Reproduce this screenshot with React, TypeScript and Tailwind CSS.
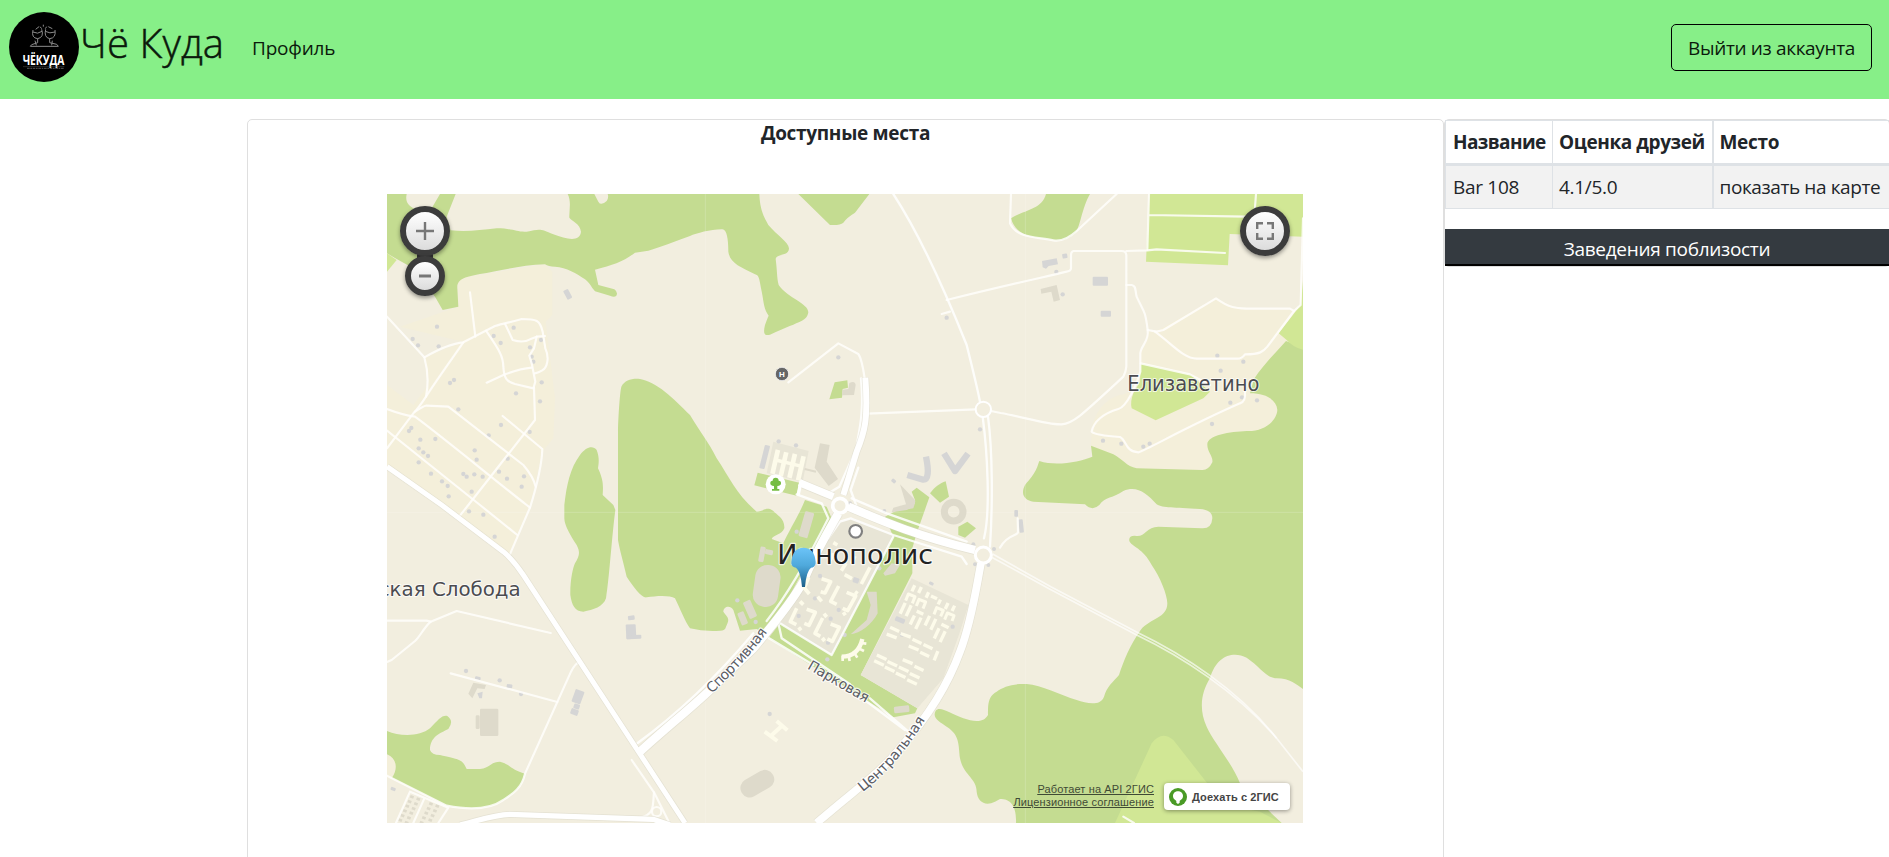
import React from "react";

const GREEN = "#c4dc91";
const LIME = "#d1e795";
const LAND = "#f2eedf";
const HOUSING = "#f4efda";
const GREY = "#d5d5d5";
const STONE = "#dedacb";
const BLOCK = "#e8e5d6";
const CREAM = "#fdfbea";

const forests = [
  "M21,27 H80 C75,50 85,60 100,70 H155 L180,27 H227 L200,95 L212,136 C260,142 300,135 350,130 C400,130 410,142 440,140 C480,132 480,130 520,148 C560,163 600,172 603,140 C600,115 575,108 568,98 C567,75 575,50 563,27 H643 L655,50 Q663,64 680,48 Q687,38 683,27 H1138 C1140,80 1155,100 1165,120 C1190,150 1225,170 1227,190 C1227,215 1190,205 1187,222 C1192,260 1190,275 1196,300 C1225,340 1285,355 1285,382 C1280,408 1270,405 1170,449 C1150,455 1150,440 1155,420 Q1162,400 1166,392 C1150,370 1152,350 1143,310 C1138,280 1136,270 1125,268 C1080,245 1050,235 1045,200 C1045,160 1040,130 1025,133 C990,133 950,145 930,153 C860,178 820,195 795,199 L765,203 C730,230 700,240 645,254 L655,300 L703,313 Q715,322 709,332 Q703,338 690,332 L645,319 C635,308 630,295 615,283 C590,265 560,248 525,245 Q505,245 495,238 C420,240 350,260 300,267 C260,275 230,280 232,310 L235,365 L188,375 L165,335 L100,250 L50,222 L21,205Z",
  "M714,960 V740 C715,690 720,620 724,605 C735,585 755,580 780,582 C830,590 880,640 930,690 C960,740 985,770 1010,820 C1050,880 1070,930 1130,980 C1150,980 1160,962 1180,978 C1190,990 1215,1000 1213,1030 C1205,1050 1180,1050 1175,1062 L1210,1075 C1225,1040 1260,985 1275,945 L1340,965 L1355,1000 L1165,1350 L1130,1332 L1080,1337 L1060,1275 C1050,1258 1030,1265 1030,1280 C1045,1300 1050,1300 1038,1325 Q1036,1337 1020,1337 Q970,1340 930,1330 C915,1310 900,1270 885,1240 C870,1230 830,1232 800,1237 C785,1240 760,1205 740,1175 C730,1130 720,1100 714,1065Z",
  "M553,960 C560,900 570,850 600,810 C620,783 640,782 650,795 C660,820 655,840 654,850 C670,885 670,900 668,930 L700,960 L706,975 C695,1060 688,1180 678,1240 C670,1265 640,1275 610,1280 C585,1280 575,1260 571,1230 C570,1190 578,1150 585,1135 C600,1110 600,1100 590,1080 C570,1050 553,1020 553,1000Z",
  "M1255,27 L1350,120 Q1380,122 1390,113 Q1400,98 1425,83 L1468,27Z",
  "M1998,27 H2130 C2105,70 2100,130 2085,145 C2060,165 2040,170 2020,166 C1970,155 1910,160 1893,100 C1930,75 1985,75 1998,27Z",
  "M2718,468 C2680,510 2650,540 2622,582 L2610,625 C2660,625 2690,645 2692,675 C2690,710 2650,740 2600,738 C2550,740 2480,750 2482,780 C2482,800 2500,815 2497,832 Q2485,857 2465,855 L2270,850 C2240,845 2225,820 2200,808 L2133,782 L2137,815 C2100,830 2030,845 1978,828 C1970,850 1970,860 1935,900 C1920,930 1935,945 1960,950 L2115,958 Q2137,980 2158,960 C2175,935 2200,940 2230,918 C2270,900 2300,925 2330,958 C2350,970 2380,967 2460,972 Q2497,975 2497,1000 Q2495,1032 2465,1030 L2335,1025 C2300,1025 2295,1055 2270,1053 Q2245,1050 2248,1068 C2255,1085 2290,1090 2315,1140 C2340,1175 2362,1230 2362,1255 C2362,1300 2310,1300 2282,1335 C2250,1380 2230,1430 2217,1470 C2200,1490 2180,1505 2172,1535 C2160,1565 2120,1555 2090,1545 C2040,1530 1985,1500 1940,1497 C1900,1495 1870,1505 1850,1520 C1820,1535 1825,1570 1824,1590 C1810,1615 1780,1610 1750,1600 C1710,1585 1680,1562 1667,1577 C1655,1600 1680,1610 1700,1625 C1740,1650 1735,1680 1740,1720 C1750,1770 1790,1780 1790,1820 C1793,1850 1815,1865 1845,1850 L1860,1842 C1890,1842 1910,1860 1908,1914 H2769 V468 Q2740,480 2718,468Z",
  "M21,1638 C60,1655 120,1655 150,1630 C175,1605 185,1590 202,1593 Q223,1608 205,1632 C180,1645 150,1655 150,1695 Q155,1710 180,1710 C240,1725 245,1720 260,1752 H300 C335,1748 330,1730 360,1730 C385,1735 395,1755 435,1766 C425,1810 400,1825 370,1845 C320,1880 240,1870 200,1862 L36,1778 C55,1750 50,1720 21,1708Z",
  "M1515,995 L1590,955 L1605,945 L1595,920 L1610,908 L1648,937 L1610,1045 L1597,1090 V1165 L1442,1470 L1612,1570 L1605,1585 L1540,1597 L1165,1360 L1200,1315 L1355,1410 L1540,1055Z",
  "M1650,925 C1665,905 1680,895 1697,889 L1707,935 L1680,953Z",
  "M1735,1025 L1762,1010 L1788,1030 L1755,1058 L1735,1050Z",
  "M1364,592 L1402,586 L1404,608 L1388,612 L1386,638 L1348,643Z",
  "M1133,863 L1258,893 L1250,932 L1123,901Z",
];

const limeFields = [
  "M21,205 L50,225 L21,260Z",
  "M2307,27 H2769 V155 L2549,147 L2544,241 L2298,230Z",
  "M2769,285 L2762,360 L2696,445 L2720,465 Q2740,488 2769,494Z",
  "M2282,535 L2430,568 L2490,620 L2470,640 L2327,706 L2255,670 Q2250,650 2260,625 L2280,590Z",
  "M2205,1914 L2315,1675 Q2345,1635 2380,1665 L2490,1805 L2540,1860 L2640,1880 L2705,1914Z",
];

const housing = [
  "M232,280 L495,238 L517,260 V390 L497,410 L525,640 L520,760 L487,800 L450,960 L388,1110 L235,1000 L21,840 V600 L100,660 L145,600 L135,517 L250,470 L60,425 L235,365Z",
  "M2302,435 L2325,440 L2508,340 L2570,370 H2735 L2760,400 V700 L2500,860 H2260 L2133,782 L2135,740 C2140,680 2180,640 2220,630 C2270,620 2281,590 2281,560 V500 C2290,485 2305,480 2302,435Z",
  "M21,1708 C50,1720 55,1750 36,1778 H21Z",
];

const lanes = [
  "M21,395 L133,517 C145,560 145,600 138,635 C125,655 110,675 100,685 L21,790",
  "M133,517 C180,490 215,475 250,472 L345,423 C370,415 390,412 425,402 C470,402 480,405 488,440 L496,490 C510,520 500,550 487,556 Q475,563 465,565",
  "M250,472 C210,530 160,600 138,635",
  "M270,322 L286,455",
  "M318,437 C350,485 370,510 370,545 C372,580 380,590 405,597 L460,610 L466,590 L455,535 L448,512 L462,490 L470,455 L495,453",
  "M375,416 L398,465 Q430,475 450,463 L470,455",
  "M320,593 L375,568 C410,555 430,550 455,548",
  "M462,608 L465,705 L265,960 L235,998",
  "M21,672 C50,683 70,690 105,695 C180,750 350,890 440,960 L450,968",
  "M105,680 Q135,660 140,662 L205,665 L430,840 Q460,875 467,905",
  "M21,737 L300,960 L412,1050",
  "M368,693 L487,792 C485,850 465,920 450,968 L388,1112",
  "M21,1307 H140 L152,1310 L230,1278 L512,1344",
  "M152,1310 C130,1330 120,1355 105,1368 L35,1425 L21,1431",
  "M212,1465 L532,1551",
  "M600,1430 Q585,1435 573,1460 L435,1766 C425,1810 400,1825 370,1845 C320,1880 240,1870 200,1862 L21,1772",
  "M90,1820 L48,1914 M90,1820 L205,1868 L175,1914 M133,1840 L100,1914",
  "M755,1725 L822,1822 C818,1860 825,1890 780,1898",
  "M822,1822 L868,1914",
  "M1225,592 L1375,475 L1435,507 Q1445,520 1454,580",
  "M1462,686 L1788,673 M1833,678 L1862,684 C1930,695 2000,720 2045,718 C2080,715 2100,695 2230,575 Q2238,560 2239,545 V210 Q2238,198 2225,198 H2080 Q2073,200 2073,210 V250 Q2073,258 2060,260 C2000,275 1900,295 1700,345",
  "M2239,198 L2302,196 L2330,193 L2535,204",
  "M1685,387 L1710,380",
  "M2307,27 L2302,195 M2305,90 L2600,95 M2628,27 L2624,80",
  "M2210,27 L2090,138 C2060,165 2040,170 2020,166 C1970,155 1910,160 1890,115 L1893,27",
  "M2239,300 H2255 C2270,302 2265,320 2270,335 C2290,380 2295,370 2303,435 C2308,470 2283,480 2281,505 V560 C2270,600 2240,665 2215,672 C2170,685 2140,710 2135,740 Q2145,750 2220,756 C2240,765 2235,800 2275,802 C2300,795 2420,725 2580,655 Q2598,650 2595,620",
  "M2303,435 L2330,440 L2350,435 L2508,340 C2550,370 2570,370 2600,371 H2730 L2742,378 L2762,360 L2769,100",
  "M2325,440 C2380,480 2410,520 2450,521 H2570 Q2585,522 2595,508 C2640,508 2650,500 2662,485 L2742,378",
  "M2282,535 L2430,568 L2490,600",
  "M1860,1088 C1885,1045 1910,1055 1914,1042 L1913,1000",
  "M2230,1895 L2262,1914",
];

const streets = [
  "M1540,27 C1620,150 1700,330 1760,480 C1780,560 1790,600 1800,650",
  "M1808,695 C1822,800 1832,980 1812,1060 M1824,695 C1838,800 1838,960 1830,1085",
  "M1443,580 C1455,700 1430,760 1430,790 L1378,905 L1345,925",
  "M1435,848 L1412,915 L1430,965",
  "M1250,928 L1325,955 L1345,1000 C1290,1110 1230,1220 1160,1308 M1120,1345 C1040,1440 930,1560 773,1674",
  "M1195,1315 L1205,1360 L1410,1498 M1160,1355 L1300,1440",
  "M1460,1550 L1575,1635 M1470,1540 L1585,1640",
  "M1540,1055 L1355,1410 L1200,1315",
  "M1345,1060 L1380,1010 L1412,1000 L1540,1050 L1745,1115 L1760,1137",
  "M1415,940 L1520,985 L1760,1070",
];

const farLanes = [
  "M1832,1115 L1860,1130 L2010,1213 L2270,1350 C2400,1412 2570,1520 2690,1660 L2769,1760",
  "M1838,1107 L1866,1123 L2014,1206 L2274,1343 C2404,1405 2577,1515 2690,1660",
];

const avenues: [string, number][] = [
  ["M21,845 L185,960 L370,1100 Q400,1125 430,1170 L915,1914", 15],
  ["M1375,985 C1320,1080 1290,1140 1270,1190 C1230,1260 1170,1330 1120,1390 L1000,1505 C950,1555 850,1635 780,1700", 25],
  ["M1803,1135 C1790,1200 1775,1310 1740,1400 C1700,1510 1640,1600 1560,1690 C1500,1765 1430,1810 1310,1914", 23],
  ["M1456,578 C1465,700 1455,740 1430,800 L1390,930", 18],
  ["M1405,965 C1500,1005 1600,1050 1785,1095", 25],
  ["M1258,893 L1360,935", 22],
  ["M240,1920 C300,1905 340,1890 390,1888 L820,1903 L870,1920", 16],
];

const dots: [number, number][] = [
  [171,425],[98,462],[114,481],[176,484],[341,453],[362,474],[401,428],[450,487],[483,465],[210,594],[222,585],
  [408,625],[485,592],[480,649],[235,673],[363,720],[326,751],[449,741],[94,729],[87,738],[121,764],[166,762],[116,790],
  [130,802],[144,813],[116,832],[284,796],[290,824],[383,821],[153,866],[186,889],[203,903],[206,934],[250,867],[260,875],
  [283,868],[308,875],[357,860],[381,881],[432,874],[425,905],[275,920],[267,979],[310,989],[344,1055],[258,1458],[359,1486],
  [423,1527],[1375,517],[1700,398],[1196,769],[1248,781],[1800,733],[2048,328],[2029,261],[2512,512],[2590,530],[2522,557],
  [2586,637],[2551,653],[2631,646],[2496,717],[2169,767],[2224,776],[2290,785],[2309,776],[455,515],[460,530],[1169,1587],
  [1072,1246],[1127,1311],[1250,1040],[1342,1423],[1566,1349],[1718,1325],[1498,1150],[1394,1350],[1305,1240],[1376,1275],
  [1256,1293],[1344,1373],[1320,1173],[1352,1301],
];

// x, y, width, height, rotation
const greyBuildings: [number, number, number, number, number][] = [
  [555,313,16,30,-28],[2047,206,15,14,-10],[2138,275,46,27,0],[2162,377,31,18,0],[1146,780,16,72,14],
  [744,1292,20,13,-8],[738,1318,30,44,-3],[740,1350,44,12,-3],[580,1515,28,40,20],[581,1557,18,15,20],[572,1572,23,18,20],
  [1903,975,11,20,0],[1917,1003,13,40,-6],[380,1498,17,11,8],[285,1475,17,9,10],[1545,1298,30,14,22],[1647,1191,14,9,25],
  [1534,883,14,10,40],[32,1807,15,10,20],[1419,1178,18,16,20],
];
const stoneBuildings: [number, number, number, number, number][] = [
  [300,1571,55,82,0],[287,1591,12,41,0],[1265,980,28,78,16],[1138,1085,16,46,10],[1155,1094,24,15,12],
  [1098,1246,24,54,-24],[1078,1280,20,40,-22],[1542,1563,46,20,-6],[1122,1140,76,126,8],
];

const creamBlocks: [number, number, number, number][] = [
  [1187,793,14,74],[1212,800,14,74],[1238,805,14,74],[1264,812,14,74],
];

// Slabs of the eastern quarter: centre x, centre y, length, rotation
const slabs: [number, number, number, number][] = [
  [190,55,20,115],[210,60,20,115],[232,75,18,115],[268,96,16,115],[290,108,20,115],[310,115,18,115],[252,82,20,25],
  [158,115,36,115],[176,122,36,115],[187,150,30,115],[205,160,38,115],[232,152,32,115],[250,163,36,115],[260,190,34,115],
  [278,200,36,115],[210,128,22,25],[285,168,24,25],[258,257,30,112],[134,178,30,25],[125,198,32,20],[167,196,32,20],
  [201,214,30,25],[234,230,30,25],[191,234,32,22],[224,253,30,25],[95,262,32,25],[87,279,32,25],[127,281,32,25],
  [119,298,32,25],[161,298,32,25],[152,316,32,25],[194,317,32,25],[186,336,32,25],[173,275,32,22],[207,295,30,25],
];
const gates = [
  "M167,92 l8,-20 l20,8 l-8,20",
  "M199,108 l8,-20 l20,8 l-8,20",
  "M252,133 l8,-20 l20,8 l-8,18",
  "M284,149 l8,-20 l20,8 l-6,16",
];

// Courtyard houses of the central quarter
const courtyards = [
  "M116,172 l-13,32 l15,18","M155,176 l27,9 l-17,34 l-13,-4","M206,198 l-24,46 l18,9","M230,217 l27,11 l-24,44 l-15,-7",
  "M80,265 l-19,40 l18,9","M110,268 l26,9 l-19,39 l-14,-6","M158,294 l-23,46 l16,9","M182,312 l26,10 l-21,42 l-15,-7",
  "M190,100 l-10,22","M300,142 l-26,50","M224,164 l22,12","M190,68 l12,7","M255,108 l-10,22","M143,230 l12,14","M220,277 l6,9",
  "M90,244 l10,10","M162,281 l8,10","M86,322 l7,9","M157,354 l7,9","M228,130 l-14,22","M255,215 l8,6",
];

const sheds: [number, number][] = [];
for (let row = 0; row < 6; row++) {
  for (let col = 0; col < 5; col++) {
    if (col !== 2) sheds.push([92 + col * 19 - row * 7, 1830 + row * 14 + col * 7]);
  }
}

const halo = { paintOrder: "stroke" as const, strokeLinejoin: "round" as const };

function MapCanvas() {
  return (
    <svg viewBox="21 27 2748 1887" preserveAspectRatio="none" className="block h-full w-full" fill="none">
      <defs>
        <linearGradient id="pin" x1="0" y1="0" x2="0" y2="1">
          <stop offset="0" stopColor="#6cc4f8" />
          <stop offset=".45" stopColor="#4fa9dc" />
          <stop offset="1" stopColor="#1d5f88" />
        </linearGradient>
        <path id="sport" d="M995,1526 C1060,1466 1130,1392 1178,1316" />
        <path id="park" d="M1280,1450 L1472,1562" />
        <path id="center" d="M1448,1821 C1528,1758 1588,1688 1648,1583" />
      </defs>
      <rect x="21" y="27" width="2748" height="1887" fill={LAND} />
      {housing.map((d) => <path key={d} d={d} fill={HOUSING} />)}
      {forests.map((d) => <path key={d} d={d} fill={GREEN} />)}
      {limeFields.map((d) => <path key={d} d={d} fill={LIME} />)}
      <path d="M2705,1914 L2580,1795 C2560,1740 2500,1670 2480,1625 C2455,1570 2465,1520 2490,1480 C2510,1410 2560,1398 2600,1418 C2640,1445 2660,1480 2690,1480 C2730,1480 2750,1500 2769,1512 V1914Z" fill={LAND} />
      <path d="M1370,1010 L1420,1000 L1540,1050 L1355,1410 L1200,1315 L1270,1210Z M1595,1180 L1765,1260 L1740,1340 L1690,1480 L1612,1570 L1442,1470Z M1180,770 L1286,798 L1268,890 L1160,865Z" fill={BLOCK} />

      <path d="M976,27 V1914 M1936,27 V1914 M21,982 H2769" stroke="#fff" strokeOpacity=".18" strokeWidth="3" />

      <g fill={STONE}>
        {stoneBuildings.map(([x, y, w, h, r]) => (
          <rect key={`${x}-${y}`} x={x} y={y} width={w} height={h} rx={w > 70 ? 36 : 4} transform={`rotate(${r} ${x + w / 2} ${y + h / 2})`} />
        ))}
        <path d="M1320,775 L1349,780 L1340,830 L1374,882 L1346,903 L1304,848Z M1408,594 Q1425,585 1427,600 L1422,630 L1386,631 L1388,614 L1405,612Z" />
        <path d="M265,1526 L280,1493 L318,1500 L314,1512 L292,1510 L277,1540Z M1982,312 L2030,300 L2040,345 L2021,350 L2014,320 L1984,326Z" />
        <path d="M1460,1220 H1490 L1493,1285 C1475,1320 1440,1345 1412,1348 L1460,1305 L1472,1260Z M1560,898 L1605,945 Q1610,965 1580,975 L1535,982 L1540,968 L1578,958Z M1510,1165 L1535,1135 L1560,1140 L1545,1165 L1515,1172Z M1535,982 L1560,962 L1605,955 L1600,970Z" />
        <rect x="1078" y="1768" width="108" height="56" rx="27" transform="rotate(-30 1132 1796)" />
      </g>
      <path d="M1274,852 L1308,860" stroke={STONE} strokeWidth="6" />
      <circle cx="1721" cy="980" r="28" stroke={STONE} strokeWidth="21" />
      <g stroke={GREY} strokeWidth="19" strokeLinejoin="round">
        <path d="M1582,870 L1630,884 Q1652,884 1638,815" />
        <path d="M1692,805 L1725,858 L1764,806" />
      </g>
      <path d="M1986,228 L2030,220 L2034,238 L2006,243 L1998,251 L1988,247Z M292,1525 L308,1520 L306,1540 H298Z" fill={GREY} />
      <g fill={GREY}>
        {greyBuildings.map(([x, y, w, h, r]) => (
          <rect key={`${x}-${y}`} x={x} y={y} width={w} height={h} rx="3" transform={`rotate(${r} ${x + w / 2} ${y + h / 2})`} />
        ))}
        {dots.map(([x, y]) => <circle key={`${x}-${y}`} cx={x} cy={y} r="6.5" />)}
        {[[1395,925],[1352,932],[1410,955],[1513,978],[1780,1078],[1842,1092],[1785,1138],[1825,1140]].map(([x, y]) => <circle key={`${x}-${y}`} cx={x} cy={y} r="6" />)}
      </g>
      <g fill={STONE}>
        {sheds.map(([x, y]) => <rect key={`${x}-${y}`} x={x} y={y} width="11" height="8" transform={`rotate(20 ${x} ${y})`} />)}
      </g>

      <g stroke="#fffefb" strokeWidth="6.5" strokeLinecap="round" strokeLinejoin="round" strokeOpacity=".85">
        {lanes.map((d) => <path key={d} d={d} />)}
        <circle cx="830" cy="1880" r="14" />
      </g>
      <g stroke="#fff" strokeLinecap="round" strokeLinejoin="round" strokeOpacity=".85">
        {streets.map((d) => <path key={d} d={d} strokeWidth="7" />)}
      </g>
      <g stroke="#fff" strokeLinejoin="round" strokeOpacity=".65">
        {farLanes.map((d) => <path key={d} d={d} strokeWidth="5" />)}
      </g>
      <g stroke="#d8d5c8" strokeOpacity=".5">
        {avenues.map(([d, w]) => <path key={d} d={d} strokeWidth={w + 4} />)}
      </g>
      <g stroke="#fff">
        {avenues.map(([d, w]) => <path key={d} d={d} strokeWidth={w} />)}
      </g>
      <path d="M1264,884 L1254,932" stroke="#fff" strokeWidth="10" />
      <g fill={LAND} stroke="#fff">
        <circle cx="1380" cy="962" r="22" strokeWidth="11" />
        <circle cx="1810" cy="1110" r="24" strokeWidth="9" />
        <circle cx="1810" cy="673" r="23" strokeWidth="6" />
      </g>

      <g fill={CREAM}>
        {creamBlocks.map(([x, y, w, h]) => <rect key={x} x={x} y={y} width={w} height={h} transform={`rotate(13 ${x} ${y})`} />)}
        <path d="M1188,820 L1270,840 L1268,850 L1186,830Z" />
      </g>
      <g stroke={CREAM} strokeWidth="10" strokeLinejoin="round">
        <g transform="translate(1170 1005)">
          {courtyards.map((d) => <path key={d} d={d} strokeWidth="11" />)}
        </g>
        <g transform="translate(1410 1155)">
          {slabs.map(([x, y, l, r]) => <path key={`${x}-${y}`} d={`M${-l / 2},0 h${l}`} transform={`translate(${x} ${y}) rotate(${r})`} />)}
          {gates.map((d) => <path key={d} d={d} strokeWidth="9" />)}
        </g>
        <path d="M1385,1415 Q1435,1415 1447,1362" strokeWidth="13" />
        <path d="M1388,1412 l0,16 M1405,1408 l4,20 M1422,1402 l10,16 M1436,1390 l16,8 M1442,1374 l17,2" strokeWidth="8" />
        <path d="M1154,1640 L1192,1668 M1190,1608 L1222,1636 M1173,1652 L1206,1622" strokeWidth="12" />
      </g>

      <circle cx="1206" cy="567" r="20" fill="#666" stroke="#fff" strokeOpacity=".7" strokeWidth="3" />
      <text x="1206" y="575" textAnchor="middle" fontFamily="Liberation Sans" fontWeight="700" fontSize="24" fill="#fff">H</text>
      <circle cx="1187" cy="898" r="30" fill="#fff" />
      <path d="M1187,878 q9,0 9,9 q8,1 7,8 q1,7 -11,8 v9 h6 v5 h-22 v-5 h6 v-9 q-12,-1 -11,-8 q-1,-7 7,-8 q0,-9 9,-9Z" fill="#76bd43" />
      <circle cx="1427" cy="1039" r="19" fill="#fff" stroke="#808080" strokeWidth="6.5" />

      <g fontFamily="DejaVu Sans, sans-serif" fill="#4b4b50" stroke="#fff" strokeOpacity=".75" style={halo}>
        <text x="2242" y="618" fontSize="62" strokeWidth="6" textLength="396" lengthAdjust="spacingAndGlyphs">Елизаветино</text>
        <text x="422" y="1234" fontSize="60" strokeWidth="6" textAnchor="end" textLength="426" lengthAdjust="spacingAndGlyphs">ская Слобода</text>
        <text x="1192" y="1138" fontSize="82" strokeWidth="7" fill="#222" textLength="467" lengthAdjust="spacingAndGlyphs">Иннополис</text>
        <g fontSize="42" strokeWidth="7" fill="#5a5c64">
          <text><textPath href="#sport" textLength="250">Спортивная</textPath></text>
          <text><textPath href="#park" textLength="205">Парковая</textPath></text>
          <text><textPath href="#center" textLength="288">Центральная</textPath></text>
        </g>
      </g>

      <path d="M1234,1130 Q1238,1088 1270,1088 Q1303,1088 1307,1130 V1136 Q1303,1148 1293,1148 Q1279,1158 1275,1206 H1266 Q1262,1158 1248,1148 Q1236,1146 1234,1136Z" fill="url(#pin)" />
    </svg>
  );
}

function Logo() {
  return (
    <svg viewBox="0 0 210 210" className="-mt-0.5 h-[70px] w-[70px] shrink-0" fill="none">
      <circle cx="105" cy="105" r="105" fill="#000" />
      <g stroke="#8c8c8c" strokeWidth="3">
        <path d="M72,54 Q66,78 86,80 Q106,76 98,52 M72,60 Q86,68 99,58 M110,52 Q104,76 122,80 Q142,78 138,54 M109,58 Q122,66 138,60" />
        <path d="M86,80 V92 L68,98 L64,103 H148 L143,97 L122,92 V80 M78,86 L82,100 M130,86 L128,100 M80,52 L90,44 M130,50 L118,44 M103,38 V44 M93,44 L98,50 M113,44 L109,50" />
      </g>
      <text x="41" y="158" fontFamily="Open Sans, sans-serif" fontWeight="700" fontSize="44" fill="#fff" textLength="125" lengthAdjust="spacingAndGlyphs">ЧЁКУДА</text>
      <path d="M42,164 H166" stroke="#555" strokeWidth="1.5" />
      <path d="M54,169 H164" stroke="#666" strokeWidth="2.5" strokeDasharray="8 2 5 2" />
    </svg>
  );
}

const knob = "absolute flex items-center justify-center rounded-full border-[#3c3c3c] bg-linear-to-b from-white to-[#dcdcdc] shadow-[0_2px_4px_rgba(0,0,0,0.4)]";

export default function App() {
  return (
    <div className="h-[857px] w-full overflow-hidden bg-white font-['Open_Sans','Noto_Sans',sans-serif] text-[19px] leading-[30px] tracking-[-0.3px] text-[#212529]">
      <header className="flex h-[99px] items-center bg-[#87ef88] pr-[17px] pb-1 pl-[9px] text-[#0b1a0c]">
        <Logo />
        <h1 className="-mt-2.5 ml-px w-[142px] text-[40px] leading-[48px] font-light tracking-[0.1px] whitespace-nowrap [-webkit-text-stroke:0.5px_#0b1a0c]">Чё Куда</h1>
        <a className="ml-[30px] tracking-[-0.2px]">Профиль</a>
        <button className="ml-auto flex h-[47px] w-[201px] items-center justify-center rounded-[5px] border border-black tracking-[-0.35px] whitespace-nowrap">
          Выйти из аккаунта
        </button>
      </header>

      <main className="mt-5 flex pl-[247px]">
        <section className="h-[760px] w-[1197px] shrink-0 rounded-t-[5px] border border-[#dfdfdf]">
          <h2 className="text-center leading-[27px] font-bold">Доступные места</h2>
          <div className="relative mt-[47px] ml-[139px] h-[629px] w-[916px] overflow-hidden tracking-normal">
            <MapCanvas />
            <div className="absolute top-[58px] left-[30px] h-2 w-4 bg-[#3c3c3c]" />
            <button className={`${knob} top-3 left-[13px] h-[50px] w-[50px] border-[6px]`}>
              <svg viewBox="0 0 18 18" className="h-[18px] w-[18px]"><path d="M0 9H18M9 0V18" stroke="#777" strokeWidth="2.4" /></svg>
            </button>
            <button className={`${knob} top-[62px] left-[18px] h-10 w-10 border-[6px]`}>
              <svg viewBox="0 0 12 4" className="h-1 w-3"><path d="M0 2H12" stroke="#777" strokeWidth="3" /></svg>
            </button>
            <button className={`${knob} top-3 left-[853px] h-[50px] w-[50px] border-[6px]`}>
              <svg viewBox="0 0 18 18" className="h-[18px] w-[18px]" fill="none"><path d="M1.2 7V1.2H7M11 1.2H16.8V7M16.8 11V16.8H11M7 16.8H1.2V11" stroke="#777" strokeWidth="2.4" /></svg>
            </button>
            <div className="absolute right-[149px] bottom-[14px] flex flex-col items-end font-['Liberation_Sans',sans-serif] text-[11px] leading-[13px] tracking-[0.12px] whitespace-nowrap text-[#3f4a35] underline">
              <a>Работает на API 2ГИС</a>
              <a>Лицензионное соглашение</a>
            </div>
            <a className="absolute right-[13px] bottom-[13px] flex h-[27px] w-[126px] items-center gap-[5px] rounded-[4px] bg-white pl-[5px] font-['Liberation_Sans',sans-serif] text-[11px] font-bold tracking-[0.1px] whitespace-nowrap text-[#444] shadow-[0_1px_4px_rgba(0,0,0,0.4)]">
              <svg viewBox="0 0 54 54" className="h-[18px] w-[18px] shrink-0">
                <circle cx="27" cy="27" r="27" fill="#4a9a26" />
                <path d="M27,10 C37,10 42,17 42,24 C42,33 34,36 32,39 V44 L27,48 L22,44 V39 C20,36 12,33 12,24 C12,17 17,10 27,10Z" fill="#fff" />
              </svg>
              Доехать с 2ГИС
            </a>
          </div>
        </section>

        <aside className="w-[446px] shrink-0">
          <div className="rounded-[5px] border border-[#dfdfdf]">
            <table className="w-full table-fixed border-collapse text-left whitespace-nowrap">
              <colgroup>
                <col className="w-[107px]" />
                <col className="w-[160px]" />
                <col />
              </colgroup>
              <thead>
                <tr className="h-[44px] border-t border-b-[3px] border-[#dee2e6] font-bold">
                  <th className="border-x border-[#dee2e6] pl-[7px] tracking-[-0.6px]">Название</th>
                  <th className="border-r-2 border-[#dee2e6] pl-[6px] tracking-[-0.4px]">Оценка друзей</th>
                  <th className="pl-[6px]">Место</th>
                </tr>
              </thead>
              <tbody>
                <tr className="h-[44px] border-b border-[#dee2e6] bg-[#f2f2f2]">
                  <td className="border-x border-[#dee2e6] pl-[7px]">Bar 108</td>
                  <td className="border-r-2 border-[#dee2e6] pl-[6px]">4.1/5.0</td>
                  <td className="pl-[6px] tracking-[-0.4px]">показать на карте</td>
                </tr>
              </tbody>
            </table>
            <button className="mt-5 flex h-[37px] w-full items-center justify-center border-b-2 border-black bg-[#343a40] pt-1 text-white">
              Заведения поблизости
            </button>
          </div>
        </aside>
      </main>
    </div>
  );
}
